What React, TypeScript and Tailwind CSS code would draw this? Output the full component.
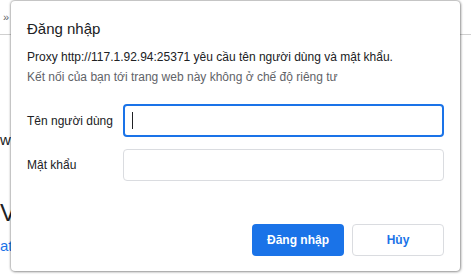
import React from 'react';

const font = { fontFamily: '"Liberation Sans", Arial, sans-serif' };

const Background = () => {
  return (
    <div className="relative h-[276px] w-[471px] overflow-hidden bg-white" style={font}>
      {/* page behind the dialog */}
      <div className="h-[35px] border-b border-[#d0d0d0] pl-[3px] pt-[10px] text-[11px] leading-[14px] text-[#5f6368]">»</div>
      <div className="mt-[96px] text-[15px] leading-[18px] text-[#202124]">wi</div>
      <div className="mt-[50px] text-[24px] leading-[28px] text-[#202124]">V</div>
      <div className="mt-[10px] text-[15px] leading-[18px] text-[#1a73e8]">at</div>
      <LoginDialog />
    </div>
  );
};

const LoginDialog = () => {
  return (
    <div className="absolute left-[11px] top-[1px] flex h-[270px] w-[449px] flex-col rounded-[4px] bg-white pl-[16px] pr-[16px] shadow-[0_0_2px_1px_rgba(0,0,0,0.28),1px_1px_3px_rgba(0,0,0,0.2)]">
      <h1 className="mt-[18px] text-[15px] leading-[20px] text-[#202124]">Đăng nhập</h1>
      <p className="mt-[10px] text-[12px] leading-[16px] text-[#202124]">
        Proxy http://117.1.92.94:25371 yêu cầu tên người dùng và mật khẩu.
      </p>
      <p className="mt-[4px] text-[12px] leading-[16px] text-[#5f6368]">
        Kết nối của bạn tới trang web này không ở chế độ riêng tư
      </p>

      <div className="mt-[19px] grid grid-cols-[96px_1fr] items-center gap-y-[12px] text-[12px] text-[#202124]">
        <label className="whitespace-nowrap">Tên người dùng</label>
        <div className="flex h-[33px] items-center rounded-[4px] border-2 border-[#1a73e8] pl-[7px]">
          <span className="h-[17px] w-px bg-[#202124]" />
        </div>
        <label className="whitespace-nowrap">Mật khẩu</label>
        <div className="h-[32px] rounded-[4px] border border-[#dadce0]" />
      </div>

      <div className="mt-auto mb-[15px] flex justify-end gap-[8px]">
        <button className="h-[32px] w-[92px] rounded-[4px] bg-[#1a73e8] text-[12px] font-bold text-white">
          Đăng nhập
        </button>
        <button className="h-[32px] w-[92px] rounded-[4px] border border-[#dadce0] bg-white text-[12px] font-bold text-[#1a73e8]">
          Hủy
        </button>
      </div>
    </div>
  );
};

export default function App() {
  return <Background />;
}
